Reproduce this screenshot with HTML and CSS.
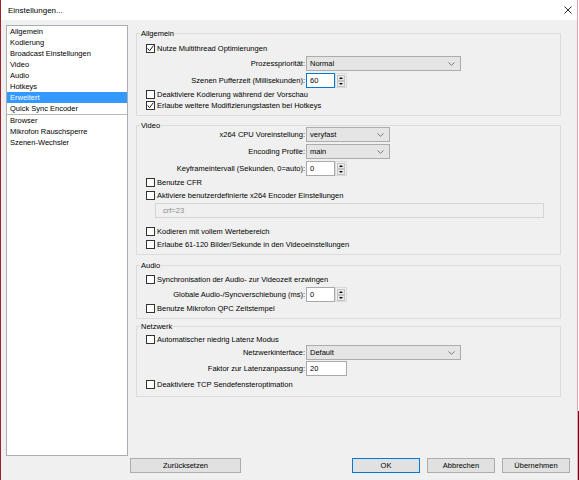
FILE: index.html
```html
<!DOCTYPE html>
<html lang="de">
<head>
    <meta charset="UTF-8">
    <title>Einstellungen...</title>
    <link rel="stylesheet" href="styles.css">
</head>
<body>
    <div class="window">
        <!-- Title bar -->
        <div class="titlebar">
            <span class="title">Einstellungen...</span>
            <svg class="close" width="8" height="8" viewBox="0 0 8 8">
                <path d="M0.5 0.5L7.5 7.5M7.5 0.5L0.5 7.5" stroke="#111" stroke-width="0.9" fill="none"/>
            </svg>
        </div>

        <div class="layout">
            <!-- Category list -->
            <ul class="nav">
                <li>Allgemein</li>
                <li>Kodierung</li>
                <li>Broadcast Einstellungen</li>
                <li>Video</li>
                <li>Audio</li>
                <li>Hotkeys</li>
                <li class="active">Erweitert</li>
                <li class="sep">Quick Sync Encoder</li>
                <li>Browser</li>
                <li>Mikrofon Rauschsperre</li>
                <li>Szenen-Wechsler</li>
            </ul>

            <div class="main">
                <!-- Allgemein -->
                <div class="group general">
                    <span class="group-title">Allgemein</span>
                    <div class="check m9"><span class="box"><svg viewBox="0 0 9 9"><polyline points="1.6,4.4 3.6,6.8 7.4,1.6"/></svg></span>Nutze Multithread Optimierungen</div>
                    <div class="field m2">
                        <span class="label">Prozesspriorität:</span>
                        <div class="select wide">Normal<svg viewBox="0 0 7 4"><polyline points="0.5,0.5 3.5,3.3 6.5,0.5"/></svg></div>
                    </div>
                    <div class="field m2">
                        <span class="label">Szenen Pufferzeit (Millisekunden):</span>
                        <div class="spin">
                            <span class="input focus">60</span>
                            <span class="arrows"><i class="up"></i><i class="down"></i></span>
                        </div>
                    </div>
                    <div class="check m1"><span class="box"></span>Deaktiviere Kodierung während der Vorschau</div>
                    <div class="check"><span class="box"><svg viewBox="0 0 9 9"><polyline points="1.6,4.4 3.6,6.8 7.4,1.6"/></svg></span>Erlaube weitere Modifizierungstasten bei Hotkeys</div>
                </div>

                <!-- Video -->
                <div class="group video">
                    <span class="group-title">Video</span>
                    <div class="field m1">
                        <span class="label">x264 CPU Voreinstellung:</span>
                        <div class="select short">veryfast<svg viewBox="0 0 7 4"><polyline points="0.5,0.5 3.5,3.3 6.5,0.5"/></svg></div>
                    </div>
                    <div class="field m2">
                        <span class="label">Encoding Profile:</span>
                        <div class="select short">main<svg viewBox="0 0 7 4"><polyline points="0.5,0.5 3.5,3.3 6.5,0.5"/></svg></div>
                    </div>
                    <div class="field m2">
                        <span class="label">Keyframeintervall (Sekunden, 0=auto):</span>
                        <div class="spin">
                            <span class="input">0</span>
                            <span class="arrows"><i class="up"></i><i class="down"></i></span>
                        </div>
                    </div>
                    <div class="check m1"><span class="box"></span>Benutze CFR</div>
                    <div class="check m2"><span class="box"></span>Aktiviere benutzerdefinierte x264 Encoder Einstellungen</div>
                    <div class="textfield m2">crf=23</div>
                    <div class="check m8"><span class="box"></span>Kodieren mit vollem Wertebereich</div>
                    <div class="check m2"><span class="box"></span>Erlaube 61-120 Bilder/Sekunde in den Videoeinstellungen</div>
                </div>

                <!-- Audio -->
                <div class="group audio">
                    <span class="group-title">Audio</span>
                    <div class="check m8"><span class="box"></span>Synchronisation der Audio- zur Videozeit erzwingen</div>
                    <div class="field m2">
                        <span class="label">Globale Audio-/Syncverschiebung (ms):</span>
                        <div class="spin">
                            <span class="input">0</span>
                            <span class="arrows"><i class="up"></i><i class="down"></i></span>
                        </div>
                    </div>
                    <div class="check m1"><span class="box"></span>Benutze Mikrofon QPC Zeitstempel</div>
                </div>

                <!-- Netzwerk -->
                <div class="group network">
                    <span class="group-title">Netzwerk</span>
                    <div class="check m7"><span class="box"></span>Automatischer niedrig Latenz Modus</div>
                    <div class="field">
                        <span class="label">Netzwerkinterface:</span>
                        <div class="select wide">Default<svg viewBox="0 0 7 4"><polyline points="0.5,0.5 3.5,3.3 6.5,0.5"/></svg></div>
                    </div>
                    <div class="field m1">
                        <span class="label">Faktor zur Latenzanpassung:</span>
                        <span class="input num">20</span>
                    </div>
                    <div class="check m3"><span class="box"></span>Deaktiviere TCP Sendefensteroptimation</div>
                </div>
            </div>

            <!-- Dialog buttons -->
            <div class="footer">
                <button class="btn reset">Zurücksetzen</button>
                <button class="btn ok">OK</button>
                <button class="btn">Abbrechen</button>
                <button class="btn">Übernehmen</button>
            </div>
        </div>
    </div>
    <div class="edge"></div>
</body>
</html>
```

FILE: styles.css
```css
* {
    margin: 0;
    padding: 0;
    box-sizing: border-box;
}

html {
    background: #fff;
}

body {
    font-family: "Liberation Sans", Arial, sans-serif;
    font-size: 7.5px;
    color: #000;
    width: 579px;
    height: 480px;
    overflow: hidden;
    display: flex;
}

.window {
    width: 578px;
    height: 480px;
    flex-shrink: 0;
    background: #f0f0f0;
    border-left: 1px solid #a3202c;
    border-right: 1px solid #e4a3aa;
}

/* desktop showing behind the window's right edge */
.edge {
    width: 1px;
    height: 480px;
    background: linear-gradient(#fff 0, #fff 411px, #6a0d1c 411px);
}

.titlebar {
    height: 20px;
    background: #fff;
    display: flex;
    align-items: center;
    justify-content: space-between;
    padding: 0 5px 0 7px;
}

.title {
    font-size: 8px;
}

.close {
    display: block;
    margin-top: -1px;
}

.layout {
    display: grid;
    grid-template-columns: 122px 1fr;
    grid-template-rows: 431px auto;
    column-gap: 8px;
    row-gap: 2px;
    padding: 5px 0 0 5px;
}

/* Category list */
.nav {
    list-style: none;
    background: #fff;
    border: 1px solid #aaadb3;
}

.nav li {
    height: 11px;
    line-height: 11px;
    padding-left: 3px;
    white-space: nowrap;
}

.nav li.active {
    background: #3399ff;
    color: #fff;
}

.nav li.sep {
    height: 12px;
    border-bottom: 1px solid #b9b9b9;
}

/* Group boxes */
.main {
    padding: 8px 16px 0 0;
}

.group {
    display: flex;
    flex-direction: column;
    border: 1px solid #dcdcdc;
}

.group.general {
    padding-bottom: 4px;
}

.group.video {
    margin-top: 9px;
    padding-bottom: 4px;
}

.group.audio {
    margin-top: 10px;
    padding-bottom: 4px;
}

.group.network {
    margin-top: 7px;
    padding-bottom: 6px;
}

.group-title {
    align-self: flex-start;
    line-height: 11px;
    height: 11px;
    margin: -6px 0 -5px 3px;
    padding: 0 1px;
    background: #f0f0f0;
}

.m1 { margin-top: 1px; }
.m2 { margin-top: 2px; }
.m3 { margin-top: 3px; }
.m7 { margin-top: 7px; }
.m8 { margin-top: 8px; }
.m9 { margin-top: 9px; }

/* Checkbox rows */
.check {
    display: flex;
    align-items: center;
    height: 11px;
    padding-left: 9px;
    white-space: nowrap;
}

.box {
    width: 9px;
    height: 9px;
    border: 1px solid #333;
    background: #fff;
    margin-right: 2px;
    flex-shrink: 0;
    position: relative;
}

.box svg {
    position: absolute;
    left: -1px;
    top: -1px;
    width: 9px;
    height: 9px;
    fill: none;
    stroke: #222;
    stroke-width: 1;
}

/* Label + control rows */
.field {
    display: flex;
    align-items: center;
    height: 15px;
}

.label {
    width: 168px;
    text-align: right;
    margin-right: 1px;
    white-space: nowrap;
}

.select {
    height: 15px;
    background: #e5e5e5;
    border: 1px solid #acacac;
    display: flex;
    align-items: center;
    justify-content: space-between;
    padding: 0 5px 0 3px;
}

.select.wide {
    width: 155px;
}

.select.short {
    width: 84px;
}

.select svg {
    width: 7px;
    height: 4px;
    fill: none;
    stroke: #6a6a6a;
    stroke-width: 0.9;
}

.spin {
    display: flex;
    align-items: center;
}

.input {
    display: flex;
    align-items: center;
    width: 29px;
    height: 15px;
    background: #fff;
    border: 1px solid #a9a9a9;
    padding-left: 3px;
}

.input.focus {
    border-color: #0078d7;
}

.input.num {
    width: 41px;
}

.arrows {
    width: 12px;
    height: 15px;
    display: flex;
    flex-direction: column;
    justify-content: center;
    align-items: center;
    border: 1px solid #dadada;
}

.arrows i {
    width: 8px;
    height: 6px;
    background: #e8e8e8;
    border: 1px solid #c4c4c4;
    display: flex;
    align-items: center;
    justify-content: center;
}

.arrows i::after {
    content: "";
    border-left: 2px solid transparent;
    border-right: 2px solid transparent;
}

.arrows .up::after {
    border-bottom: 2px solid #000;
}

.arrows .down::after {
    border-top: 2px solid #000;
}

.textfield {
    height: 15px;
    margin-left: 18px;
    width: 389px;
    border: 1px solid #d5d5d5;
    background: #f0f0f0;
    color: #8d8d8d;
    display: flex;
    align-items: center;
    padding-left: 7px;
}

/* Dialog buttons */
.footer {
    grid-column: 1 / -1;
    display: flex;
    gap: 7px;
    padding-right: 7px;
}

.btn {
    width: 68px;
    height: 15px;
    font-family: inherit;
    font-size: 7.5px;
    background: #e1e1e1;
    border: 1px solid #adadad;
    color: #000;
}

.btn.reset {
    width: 111px;
    margin-left: 124px;
    margin-right: auto;
}

.btn.ok {
    border-color: #0078d7;
}
```
